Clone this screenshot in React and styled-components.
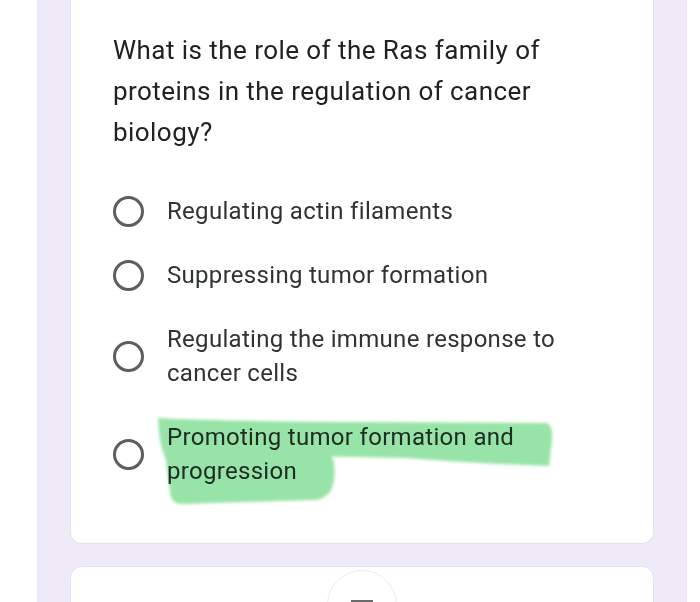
import React from "react";
import styled, { createGlobalStyle } from "styled-components";

const GlobalStyle = createGlobalStyle`
  html, body {
    margin: 0;
    padding: 0;
    background: #ffffff;
    font-family: Roboto, "Liberation Sans", sans-serif;
  }
`;

const Page = styled.div`
  width: 700px;
  height: 602px;
  overflow: hidden;
  background: #ffffff;
  padding-left: 37px;
  box-sizing: border-box;
`;

const Column = styled.div`
  width: 650px;
  height: 100%;
  background: #efeaf8;
  padding: 0 33px;
  box-sizing: border-box;
  display: flex;
  flex-direction: column;
  gap: 22px;
`;

const Card = styled.div`
  background: #ffffff;
  border: 1px solid #e6e1ee;
  border-top: none;
  border-radius: 0 0 12px 12px;
  padding: 30px 30px 55px 42px;
  box-sizing: border-box;
`;

const NextCard = styled.div`
  background: #ffffff;
  border: 1px solid #e6e1ee;
  border-radius: 12px 12px 0 0;
  flex: 1;
  display: flex;
  justify-content: center;
  padding-top: 3px;
`;

const Question = styled.div`
  font-size: 26px;
  letter-spacing: 0.45px;
  line-height: 41px;
  color: #202124;
  width: 480px;
`;

const Options = styled.div`
  display: flex;
  flex-direction: column;
  gap: 30px;
  margin-top: 41px;
`;

const Option = styled.div`
  display: flex;
  align-items: center;
  gap: 23px;
`;

const Radio = styled.div`
  width: 31px;
  height: 31px;
  border: 3px solid #5b5e62;
  border-radius: 50%;
  box-sizing: border-box;
  flex-shrink: 0;
`;

const Label = styled.div`
  position: relative;
  font-size: 24px;
  letter-spacing: 0.3px;
  line-height: 34px;
  color: #303336;
  width: 410px;
`;

const Marker = styled.svg`
  position: absolute;
  left: -12px;
  top: -6px;
  mix-blend-mode: multiply;
  pointer-events: none;
`;

const RoundButton = styled.div`
  width: 70px;
  height: 70px;
  border: 1px solid #ececec;
  border-radius: 50%;
  display: flex;
  justify-content: center;
  padding-top: 27px;
  box-sizing: border-box;
`;

const options = [
  "Regulating actin filaments",
  "Suppressing tumor formation",
  "Regulating the immune response to cancer cells",
];

export default function App() {
  return (
    <Page>
      <GlobalStyle />
      <Column>
        <Card>
          <Question>
            What is the role of the Ras family of proteins in the regulation of
            cancer biology?
          </Question>
          <Options>
            {options.map((o) => (
              <Option key={o}>
                <Radio />
                <Label>{o}</Label>
              </Option>
            ))}
            <Option>
              <Radio />
              <Label>
                Promoting tumor formation and progression
                <Marker width="410" height="95" viewBox="0 0 410 95">
                  <defs>
                    <filter id="soft" x="-5%" y="-20%" width="110%" height="140%">
                      <feGaussianBlur stdDeviation="1.8" />
                    </filter>
                  </defs>
                  <g filter="url(#soft)" fill="#86df98" opacity="0.85">
                    <path d="M3 4 Q60 7 200 8 L392 9 Q398 12 397 26 L394 52 Q330 50 250 44 L150 42 L10 44 Q4 30 3 4 Z" />
                    <path d="M10 40 L176 42 Q181 48 179 66 Q177 84 160 86 L28 90 Q16 91 15 78 Z" />
                  </g>
                </Marker>
              </Label>
            </Option>
          </Options>
        </Card>
        <NextCard>
          <RoundButton>
            <svg width="24" height="12" viewBox="0 0 24 12">
              <rect x="1" y="2" width="22" height="2.5" fill="#6b6b6b" />
              <rect x="11" y="4" width="2" height="8" fill="#8a8a8a" />
            </svg>
          </RoundButton>
        </NextCard>
      </Column>
    </Page>
  );
}
